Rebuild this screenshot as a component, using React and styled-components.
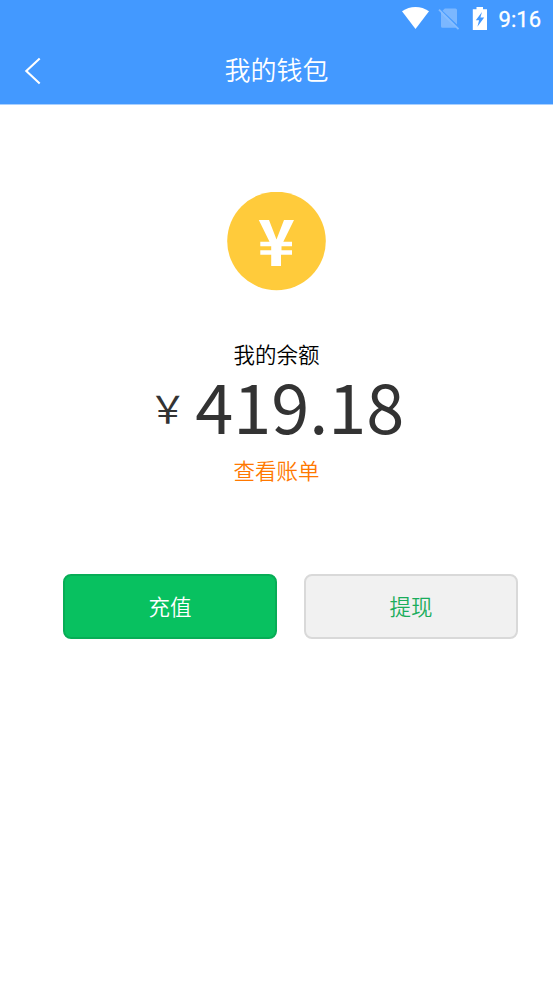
import React from 'react';
import styled, { createGlobalStyle } from 'styled-components';

const GlobalStyle = createGlobalStyle`
  * {
    box-sizing: border-box;
  }

  body {
    margin: 0;
    background-color: #ffffff;
    font-family: 'Noto Sans CJK SC', sans-serif;
    font-weight: 350;
  }
`;

const Container = styled.div`
  display: flex;
  flex-direction: column;
  width: 553px;
  height: 983px;
  overflow: hidden;
`;

const Header = styled.header`
  height: 104px;
  flex-shrink: 0;
  background-color: #4399ff;
  color: #ffffff;
`;

const StatusBar = styled.div`
  display: flex;
  justify-content: flex-end;
  align-items: center;
  height: 38px;
  padding-right: 12px;
`;

const StatusIcons = styled.svg`
  display: block;
  width: 92px;
  height: 38px;
`;

const Clock = styled.span`
  width: 43px;
  margin-left: 5px;
  font-family: Roboto, sans-serif;
  font-size: 22px;
  font-weight: 400;
  line-height: 39px;
  text-align: right;
  -webkit-text-stroke: 0.3px #ffffff;
`;

const NavBar = styled.div`
  display: grid;
  grid-template-columns: 64px 1fr 64px;
  align-items: start;
  height: 64px;
`;

const BackButton = styled.button`
  height: 64px;
  padding: 0;
  border: none;
  background: none;

  svg {
    display: block;
  }
`;

const Title = styled.h1`
  margin: 0;
  font-size: 26px;
  font-weight: 350;
  line-height: 62px;
  text-align: center;
`;

const Wallet = styled.main`
  display: flex;
  flex-direction: column;
  align-items: center;
  padding-top: 87px;
  border-top: 1px solid #a9d0ff;
`;

const Coin = styled.svg`
  display: block;
  width: 99px;
  height: 99px;
`;

const Label = styled.p`
  margin: 47px 0 0;
  font-size: 21.5px;
  line-height: 32px;
  color: #000000;
`;

const Balance = styled.div`
  display: flex;
  height: 84px;
  color: #333333;
`;

const Currency = styled.span`
  margin-right: 8.5px;
  font-size: 38px;
  font-weight: 400;
  line-height: 74px;
`;

const Amount = styled.span`
  font-size: 68.5px;
  font-weight: 400;
  line-height: 70px;
`;

const BillLink = styled.a`
  font-size: 21.5px;
  line-height: 32px;
  color: #ff7800;
`;

const Actions = styled.div`
  display: flex;
  gap: 27px;
  align-self: stretch;
  margin-top: 88px;
  padding-left: 63px;
`;

const Button = styled.button`
  width: 214px;
  height: 65px;
  padding: 0 0 2px;
  border: 2px solid ${props => (props.$primary ? '#07ad56' : '#d9d9d9')};
  border-radius: 8px;
  background-color: ${props => (props.$primary ? '#08c160' : '#f1f1f1')};
  color: ${props => (props.$primary ? '#ffffff' : '#1aad5c')};
  font-family: inherit;
  font-size: 21.5px;
  font-weight: inherit;
  line-height: 58px;
`;

const App = () => (
  <>
    <GlobalStyle />
    <Container>
      <Header>
        <StatusBar>
          <StatusIcons viewBox="401 0 92 38" fill="#ffffff">
            <path d="M402 11.3C410 5.6 421 5.6 429 11.3L415.5 29Z" />
            <path
              d="M444.8 8.5H455.5Q457 8.5 457 10V24.5L442.5 10.8ZM441 12.5L456 27.8H442.5Q441 27.8 441 26.3Z"
              opacity="0.3"
            />
            <path d="M439 9.7L458.5 29.2" stroke="#ffffff" strokeWidth="1.7" opacity="0.35" />
            <path
              fillRule="evenodd"
              d="M476.5 7H483V9.3H487V30H472.8V9.3H476.5ZM482 12L475.8 20.3H479.1L477.4 26.7L484.2 17.5H480.4Z"
            />
          </StatusIcons>
          <Clock>9:16</Clock>
        </StatusBar>
        <NavBar>
          <BackButton aria-label="返回">
            <svg width="64" height="64" viewBox="0 38 64 64" fill="none">
              <path d="M39.7 58.5L26.3 71L39.7 83.5" stroke="#ffffff" strokeWidth="2.1" />
            </svg>
          </BackButton>
          <Title>我的钱包</Title>
        </NavBar>
      </Header>
      <Wallet>
        <Coin viewBox="227 192 99 99">
          <circle cx="276.5" cy="241" r="49.3" fill="#ffcb3b" />
          <path
            d="M258.8 220H269L276.5 239.5L284 220H294L283.3 241.8H292V246.3H281.5V250.3H292V254.8H281V266H271.2V254.8H260.3V250.3H271.2V246.3H260.3V241.8H269.5Z"
            fill="#ffffff"
          />
        </Coin>
        <Label>我的余额</Label>
        <Balance>
          <Currency>￥</Currency>
          <Amount>419.18</Amount>
        </Balance>
        <BillLink>查看账单</BillLink>
        <Actions>
          <Button $primary>充值</Button>
          <Button>提现</Button>
        </Actions>
      </Wallet>
    </Container>
  </>
);

export default App;
